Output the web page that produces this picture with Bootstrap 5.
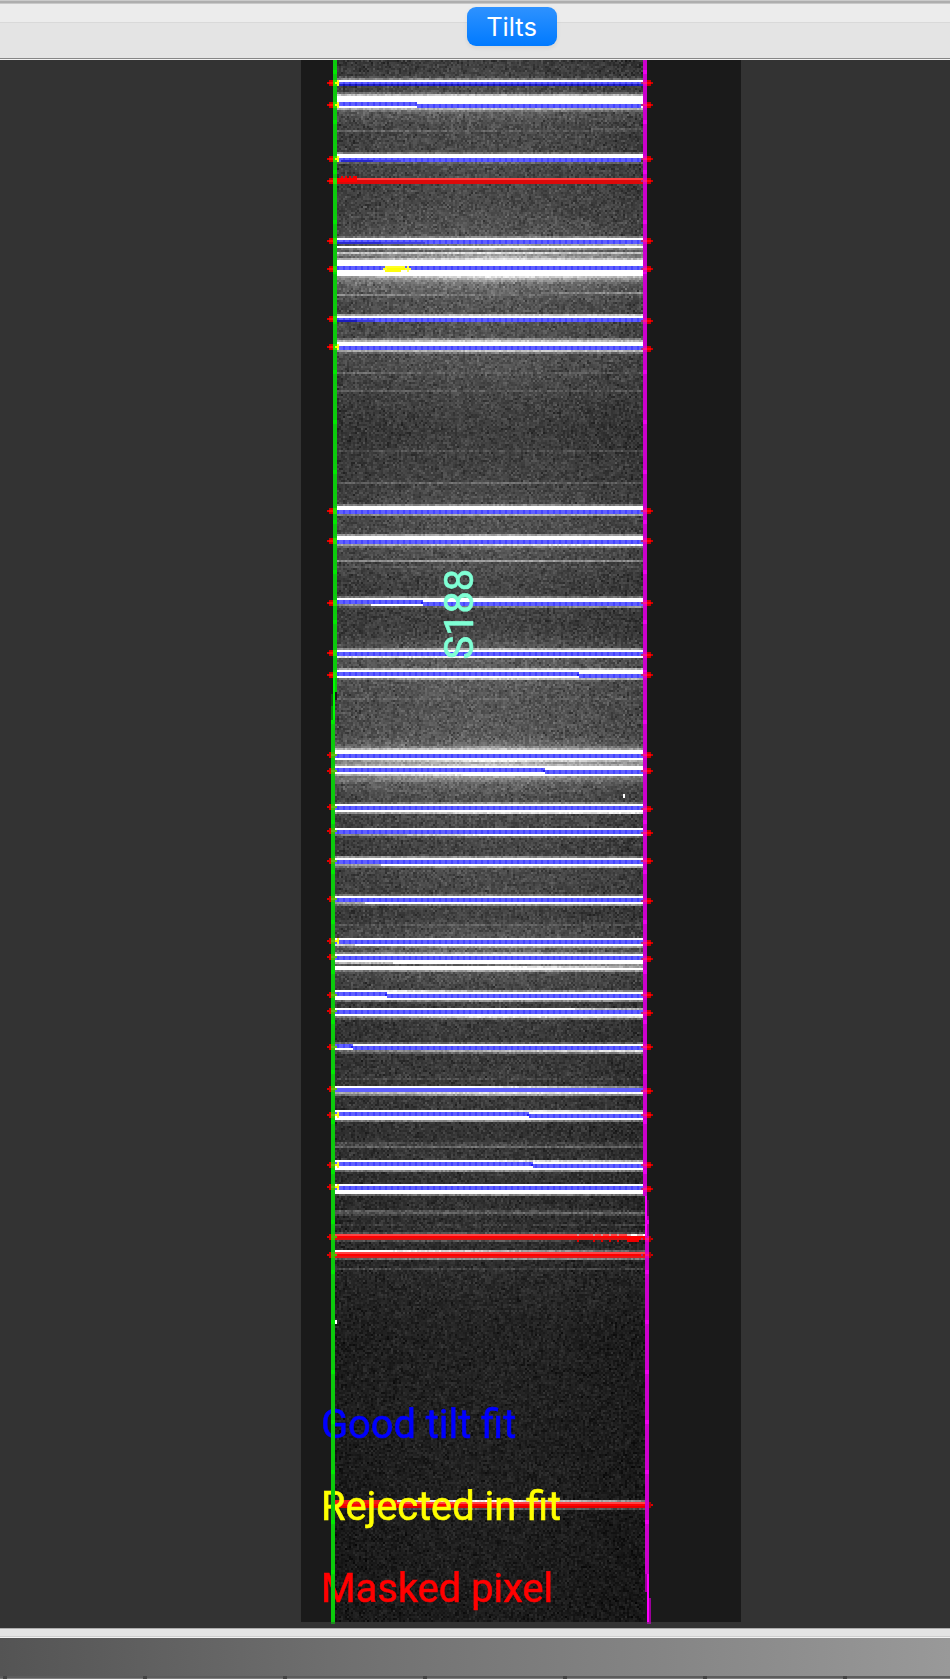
<!DOCTYPE html>
<html lang="en">
<head>
<meta charset="utf-8">
<meta name="viewport" content="width=device-width, initial-scale=1">
<title>Tilts</title>
<link href="https://cdn.jsdelivr.net/npm/bootstrap@5.3.0/dist/css/bootstrap.min.css" rel="stylesheet">
<style>
body { background: #333; width: 950px; height: 1679px; font-family: Inter, "Liberation Sans", sans-serif; }
.tab-strip { height: 60px; padding-top: 7px; background: linear-gradient(#cacaca 0 1px, #aeaeae 1px 3px, #c8c8c8 3px 4px, #ececec 4px 22px, #d9d9d9 22px 23px, #e4e4e4 23px 58px, #858585 58px 59px, #f2f2f2 59px); padding-left: 74px; }
.tab-btn { width: 90px; height: 39px; border-radius: 9px; border: 0; color: #fff; font-size: 25.5px; line-height: 36px; background: linear-gradient(#2e92ff, #007aff); }
.tab-btn span { display: inline-block; margin-left: -1px; }
.stage { height: 1568px; background: #333; }
.frame-view { width: 440px; height: 1562px; margin-left: 301px; background: #1a1a1a; }
.frame-view canvas { width: 440px; height: 1566px; image-rendering: pixelated; display: block; }
.overlay { left: 0; top: 0; }
.overlay text { font-family: Roboto, "Liberation Sans", sans-serif; font-size: 39.8px; stroke-width: .6px; }
.divider { height: 10px; background: linear-gradient(#adadad 0 1px, #e4e4e4 1px 8px, #cfcfcf 8px 9px, #f2f2f2 9px); }
.colorbar { height: 41px; background: linear-gradient(90deg, #545454, #727272 40%, #858585 70%, #999); }
.axis { height: 3px; background: linear-gradient(#5c5c5c 0 2px, #7e7e7e 2px); gap: 136px; padding-left: 3px; }
.axis span { width: 4px; height: 3px; background: #444; flex: none; }
</style>
</head>
<body class="overflow-hidden d-flex flex-column">
<header class="tab-strip d-flex justify-content-center align-items-start">
  <button class="tab-btn btn p-0 shadow-sm"><span>Tilts</span></button>
</header>
<main class="stage">
  <div class="frame-view position-relative">
    <canvas id="frame" width="220" height="783"></canvas>
    <svg class="overlay position-absolute" width="440" height="1566" viewBox="301 60 440 1566">
      <text transform="translate(473 659.5) rotate(-90)" fill="#7fffd4" stroke="#7fffd4">S188</text>
      <text x="321" y="1437.5" fill="#0000ff" stroke="#0000ff">Good tilt fit</text>
      <text x="321" y="1519.5" fill="#ffff00" stroke="#ffff00">Rejected in fit</text>
      <text x="321" y="1601.5" fill="#ff0000" stroke="#ff0000">Masked pixel</text>
      <g shape-rendering="crispEdges" id="edges"></g>
    </svg>
  </div>
</main>
<div class="divider"></div>
<div class="colorbar d-flex flex-column justify-content-end">
  <div class="axis d-flex"><span></span><span></span><span></span><span></span><span></span><span></span><span></span></div>
</div>
<script src="https://cdn.jsdelivr.net/npm/bootstrap@5.3.0/dist/js/bootstrap.bundle.min.js"></script>
<script>
const c = document.getElementById('frame').getContext('2d');
let seed = 188;
const rnd = () => { seed = (seed * 1664525 + 1013904223) >>> 0; return seed / 4294967296; };
const px = (x0, x1, y, h, col) => { c.fillStyle = col; c.fillRect((x0 - 301) / 2, (y - 60) / 2, (x1 - x0) / 2, h / 2); };
const leftAt = y => y < 700 ? 337 : 335, rightAt = y => y < 1196 ? 643 : 645;

// sky level along the slit
const sky = [[60,60],[92,78],[112,95],[125,74],[200,72],[234,85],[240,110],[276,160],[284,108],[300,84],[330,80],[360,82],[390,70],[430,60],[480,68],[505,78],[550,82],[580,68],[630,66],[650,92],[680,92],[700,84],[735,88],[748,115],[782,100],[795,80],[850,68],[870,74],[915,65],[950,95],[975,80],[985,70],[1030,58],[1100,58],[1130,52],[1160,55],[1200,48],[1230,48],[1262,44],[1330,34],[1500,31],[1622,27]];
const level = y => {
  let i = 1; while (i < sky.length - 1 && sky[i][0] < y) i++;
  const [a, b] = sky[i - 1], [d, e] = sky[i];
  return b + (e - b) * (y - a) / (d - a);
};
for (let y = 60; y < 1622; y += 2) for (let x = leftAt(y); x < rightAt(y); x += 2) {
  const base = level(y), t = (x - 335) / 310;
  const g = base * (0.86 + 0.2 * Math.sin(Math.PI * t) - 0.06 * t) + (rnd() + rnd() + rnd() - 1.5) * (10 + base * 0.18);
  const v = Math.max(0, Math.round(g));
  px(x, x + 2, y, 2, `rgb(${v},${v},${v})`);
}
// sky-line row: y, level at the left, middle and right
function row(y, a, m = a, b = m, x0, x1) {
  x0 = x0 || leftAt(y); x1 = x1 || rightAt(y);
  for (let x = x0; x < x1; x += 2) {
    const t = (x - 335) / 310, l = t < .5 ? a + (m - a) * t * 2 : m + (b - m) * (t - .5) * 2;
    const v = Math.max(0, Math.min(255, Math.round(l + (l < 250 ? (rnd() - .5) * 42 : 0))));
    px(x, x + 2, y, 2, `rgb(${v},${v},${v})`);
  }
}
const white = (y, h, x0, x1) => px(x0 || leftAt(y), x1 || rightAt(y), y, h, '#fff');
function blue(y, x0, x1, dashes = true) {
  x0 = x0 || leftAt(y); x1 = x1 || rightAt(y);
  px(x0, x1, y, 4, '#6060ff');
  if (dashes) for (let x = 337; x < x1; x += 6) if (x >= x0) px(x, x + 2, y, 4, '#4444ff');
}
const stepped = (y, x) => { px(leftAt(y), rightAt(y), y, 6, '#fff'); blue(y, 0, x); blue(y + 2, x, 0); px(x - 2, x, y + 2, 2, '#1a1aff'); };

[[130,104,95,78],[294,135,115,80],[372,108,92,85],[390,92,88,84],[450,80,82,78],[482,96,110,85],[560,135,165,135],[566,95,85,75],
 [780,120,120,100],[698,95,100,85],[924,78,98,72],[1078,70,78,60],[1142,80,68,60],[1144,70,72,60],[1146,95,110,98],
 [1210,90,80,60],[1212,80,100,105],[1214,62,64,66],[1224,60,62,62],[1268,72,64,62]].forEach(r => row(...r));
row(128, 85, 84, 88, 591); row(292, 100, 100, 150, 541);

row(76, 85, 75, 65); row(78, 135, 125, 95); white(80, 2); blue(82); px(337, 643, 84, 2, '#2222c8');
for (let x = 337; x < 643; x += 6) px(x, x + 2, 84, 2, '#1111aa');
row(92, 115, 95, 90); row(94, 190, 195, 180); white(96, 12); blue(102, 339, 417); blue(104, 417, 641); row(108, 160, 200, 170); row(110, 100, 130, 100);
row(152, 125, 120, 100); white(154, 4); blue(158, 0, 641); px(341, 373, 160, 2, '#2828cc'); px(373, 401, 160, 2, '#4242e4'); row(162, 90, 105, 95);
px(337, 643, 178, 2, '#ff4040'); px(337, 643, 180, 4, '#dc0a0a');
px(337, 357, 178, 4, '#f00'); for (const x of [341, 345, 349, 353, 355]) px(x, x + 2, 176, 2, '#e00');
row(236, 110, 140, 125); white(238, 2); blue(240); px(337, 381, 242, 2, '#2a2ad0'); px(381, 425, 242, 2, '#4040e4'); row(244, 80, 145, 185); white(246, 2);
row(248, 115, 175, 125); row(250, 95, 110, 95); row(252, 190, 225, 180); row(254, 130, 160, 120); row(256, 95, 185, 125); row(258, 170, 225, 180);
white(260, 16); blue(266); px(385, 405, 266, 2, '#ffff24'); px(407, 409, 266, 2, '#ffff24'); px(383, 411, 268, 2, '#ffff30'); px(387, 405, 268, 2, '#ffff00'); px(385, 401, 270, 2, '#ffff10'); px(407, 409, 270, 2, '#ffff60');
row(276, 155, 230, 180); row(278, 125, 180, 140); row(280, 110, 150, 120);
row(314, 160, 205, 200); white(316, 2); blue(318); px(337, 357, 320, 2, '#1c1cbb'); px(357, 375, 320, 2, '#3c3cdc');
row(338, 110, 140, 120); row(340, 175, 205, 180); white(342, 4); blue(346); row(350, 155, 200, 180); row(352, 95, 125, 110);
row(504, 130, 150, 115); white(506, 4); blue(510); row(514, 125, 175, 160);
row(534, 150, 170, 140); white(536, 4); blue(540); row(544, 150, 215, 245); row(546, 95, 120, 125);
row(596, 120, 125, 110); white(598, 2); stepped(600, 423); white(600, 2, 423); blue(602, 423); row(604, 130, 240, 255, 337, 371); row(606, 75, 120, 145);
row(648, 140, 185, 155); white(650, 8); blue(652); row(656, 225, 255, 255);
row(668, 155, 190, 175); white(670, 8); stepped(672, 579); row(678, 105, 195, 175);
row(746, 105, 150, 110); row(748, 180, 200, 155); white(750, 10); blue(754); row(760, 130, 240, 170); row(762, 135, 175, 140); row(764, 160, 205, 160);
white(766, 10); stepped(768, 545); row(774, 155, 255, 255, 335, 465); row(776, 110, 165, 120); row(778, 120, 140, 110);
row(802, 95, 150, 115); white(804, 8); blue(806); row(812, 140, 220, 235);
white(828, 8); blue(830); row(834, 115, 255, 255); row(836, 70, 110, 95);
row(856, 160, 140, 110); white(858, 8); blue(860); row(864, 150, 255, 255, 335, 381); row(866, 110, 165, 175);
row(894, 105, 120, 100); white(896, 8); blue(898); row(902, 160, 255, 255, 335, 365); row(904, 105, 140, 145);
white(938, 8); blue(940); row(944, 210, 240, 255, 335, 355); row(946, 105, 165, 155);
row(952, 130, 165, 125); white(954, 10); blue(956); row(962, 180, 245, 255, 335, 393); row(964, 75, 110, 150); white(966, 4); row(966, 260, 260, 160, 495); row(970, 110, 165, 150);
row(990, 285, 150, 125); white(992, 8); stepped(992, 387); px(335, 387, 996, 4, '#fff'); white(992, 2, 387); row(1000, 105, 145, 135);
white(1008, 10); blue(1010); row(1008, 250, 240, 175, 575); row(1016, 115, 230, 210); row(1018, 85, 100, 95);
row(1042, 105, 100, 90); stepped(1044, 353); white(1048, 2, 335, 353); row(1050, 100, 185, 235); row(1052, 75, 115, 135);
white(1086, 8); row(1086, 260, 250, 120, 475); blue(1088, 0, 0, false); row(1092, 165, 225, 250); row(1094, 110, 165, 130);
white(1110, 10); row(1110, 260, 245, 145, 510); stepped(1112, 529); row(1120, 110, 145, 110);
white(1160, 10); row(1160, 260, 245, 165, 495); stepped(1162, 533); row(1170, 110, 145, 120);
white(1184, 10); blue(1186); row(1194, 85, 140, 110);
row(1232, 80, 80, 70); px(335, 645, 1234, 2, '#ff4444'); px(335, 645, 1236, 2, '#f00'); px(335, 645, 1238, 2, '#d41414');
for (const x of [577, 593, 601, 609, 617]) { px(x, x + 2, 1234, 2, '#c99'); px(x, x + 2, 1240, 2, '#d00'); }
px(627, 645, 1234, 2, '#dcbcbc'); px(631, 637, 1234, 2, '#fff'); px(643, 645, 1234, 2, '#fff'); px(627, 645, 1238, 2, '#f00'); px(627, 639, 1240, 2, '#e00');
row(1240, 75, 85, 60, 335, 575);
row(1250, 285, 190, 85); px(335, 645, 1252, 2, '#ff4444'); px(335, 645, 1254, 2, '#f00'); px(335, 645, 1256, 2, '#e51818'); row(1258, 90, 150, 115);
row(1500, 210, 250, 130); px(335, 645, 1502, 2, '#ff4444'); px(335, 645, 1504, 2, '#f00'); px(335, 645, 1506, 2, '#e00000'); px(335, 397, 1500, 4, '#ee1c1c'); row(1508, 50, 95, 75);
px(623, 625, 794, 4, '#fff'); px(335, 337, 1320, 4, '#fff');

// traced slit edges
const svg = [];
const box = (x, y, w, h, f, o = 1) => svg.push(`<rect x="${x}" y="${y}" width="${w}" height="${h}" fill="${f}" opacity="${o}"/>`);
const G = '#0cca0c', M = '#cc00cc';
box(333, 60, 4, 632, G); box(331, 694, 2, 12, '#145014'); box(331, 706, 2, 14, '#0a8a0a'); box(333, 670, 2, 50, '#00ff00'); box(331, 720, 4, 902, G); box(331, 1622, 4, 2, '#1f8a1f');
box(643, 60, 4, 1136, M); box(645, 1196, 2, 42, '#ff00ff'); box(647, 1200, 2, 16, '#600060'); box(647, 1216, 2, 22, '#b000b0'); box(645, 1238, 4, 336, M); box(647, 1574, 2, 48, '#ff00ff'); box(645, 1574, 2, 18, '#990099'); box(649, 1598, 2, 24, '#990099'); box(647, 1622, 4, 2, '#8f1a8f');
for (let y = 70; y < 1620; y += 50) { box(y < 700 ? 333 : 331, y, 4, 4, '#00ea00'); if (y < 1570) box(y < 1200 ? 643 : 645, y, 4, 4, '#ed00ed'); }
// end markers of each arc line: left row, right row
const ends = [[82],[104],[158],[180],[240],[268],[318,320],[346,348],[510],[540],[602],[652,654],[674],[754],[770],[806,808],[830,832],[860],[898,900],[940,942],[956,958],[994],[1010,1012],[1046],[1088,1090],[1114],[1164],[1186,1188],[1236,1238],[1254]];
const warm = [82,104,158,346,940,1114,1164,1186];
for (const [l, r = l] of ends) {
  box(327, l, 6, 2, '#e00000');
  if (l < 700) { box(329, l - 2, 4, 6, '#cc0000'); box(329, l, 4, 2, '#ff1000'); box(333, l - 2, 4, 6, '#28e400'); }
  else { box(329, l - 2, 2, 6, '#d80000'); box(331, l - 2, 4, 6, '#3cc000'); box(331, l, 6, 2, l > 1200 ? '#50b800' : '#60c018'); }
  if (warm.includes(l)) { box(337, l - 2, 2, 6, '#ffff30'); box(335, l, 4, 2, '#ffff00'); }
  const e = r > 1200 ? 2 : 0;
  if (!e) { box(647, r - 2, 4, 6, '#c00000'); box(647, r, 4, 2, '#ff0000'); } else box(649, r - 2, 2, 6, '#b00000');
  box(651, r, 2, 2, '#c80000'); box(641, r, 2, 2, '#a03080'); box(643 + e, r - 2, 4, 6, '#e600c0'); box(643 + e, r, 4, 2, '#ff1490');
}
box(649, 1504, 4, 2, '#d00'); box(649, 1502, 2, 6, '#a00');
document.getElementById('edges').innerHTML = svg.join('');
</script>
</body>
</html>
